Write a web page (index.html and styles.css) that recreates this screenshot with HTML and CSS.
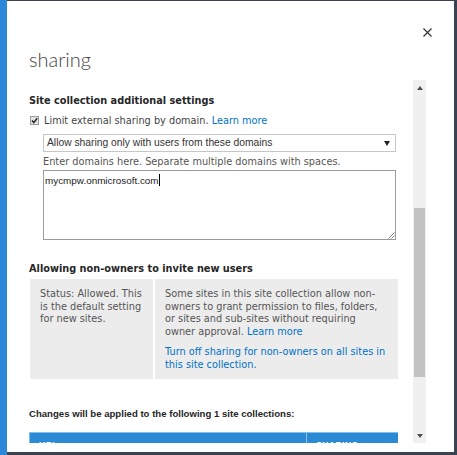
FILE: index.html
```html
<!DOCTYPE html>
<html lang="en">
<head>
<meta charset="utf-8">
<title>sharing</title>
<link rel="stylesheet" href="styles.css">
</head>
<body>
<div class="app-strip"></div>
<div class="dialog">
  <div class="dlg-head">
    <h1 class="title">sharing</h1>
    <button class="close" aria-label="Close">
      <svg width="9" height="9" viewBox="0 0 9 9"><path d="M0.5 0.5 L8.5 8.5 M8.5 0.5 L0.5 8.5" stroke="#333" stroke-width="1.2" fill="none"/></svg>
    </button>
  </div>
  <div class="scroll">
    <div class="scroll-content">
      <section class="sec">
        <h2 class="sec-h">Site collection additional settings</h2>
        <div class="check-row">
          <span class="cb"><svg width="9" height="9" viewBox="0 0 9 9"><rect x="0.5" y="0.5" width="8" height="8" fill="#e6e6e6" stroke="#9a9a9a"/><path d="M2 4.6 L3.8 6.6 L7.2 2.2" stroke="#222" stroke-width="1.5" fill="none"/></svg></span>
          <span>Limit external sharing by domain. <a class="link" href="#">Learn more</a></span>
        </div>
        <div class="indent">
          <div class="select">
            <span>Allow sharing only with users from these domains</span>
            <svg class="sel-arrow" width="6" height="5" viewBox="0 0 6 5"><path d="M0 0 H6 L3 5 Z" fill="#222"/></svg>
          </div>
          <div class="hint">Enter domains here. Separate multiple domains with spaces.</div>
          <div class="textarea">
            <span class="ta-text">mycmpw.onmicrosoft.com</span><span class="caret"></span>
            <svg class="grip" width="8" height="8" viewBox="0 0 8 8"><path d="M7.5 1.5 L1.5 7.5 M7.5 4.5 L4.5 7.5" stroke="#888" stroke-width="1" fill="none"/></svg>
          </div>
        </div>
      </section>

      <section class="sec sec-invite">
        <h2 class="sec-h">Allowing non-owners to invite new users</h2>
        <div class="info-grid">
          <div class="info-cell info-left">Status: Allowed. This is the default setting for new sites.</div>
          <div class="info-cell info-right">
            <p>Some sites in this site collection allow non-owners to grant permission to files, folders, or sites and sub-sites without requiring owner approval. <a class="link" href="#">Learn more</a></p>
            <p><a class="link" href="#">Turn off sharing for non-owners on all sites in this site collection.</a></p>
          </div>
        </div>
      </section>

      <section class="sec sec-changes">
        <h2 class="changes-h">Changes will be applied to the following 1 site collections:</h2>
        <div class="tbl-head">
          <div class="th th-url">URL</div>
          <div class="th th-sharing">SHARING</div>
        </div>
      </section>
    </div>
    <div class="scrollbar">
      <div class="sb-btn"><svg width="6" height="4" viewBox="0 0 6 4"><path d="M0 4 H6 L3 0 Z" fill="#505050"/></svg></div>
      <div class="sb-track">
        <div class="sb-thumb"></div>
      </div>
      <div class="sb-btn"><svg width="6" height="4" viewBox="0 0 6 4"><path d="M0 0 H6 L3 4 Z" fill="#505050"/></svg></div>
    </div>
  </div>
</div>
</body>
</html>
```

FILE: styles.css
```css
* { box-sizing: border-box; }

html, body {
  margin: 0;
  padding: 0;
}

body {
  width: 457px;
  height: 455px;
  overflow: hidden;
  display: flex;
  background: #3b4350;
  font-family: "DejaVu Sans", Verdana, sans-serif;
  font-size: 9.75px;
  line-height: 12.6px;
  color: #444;
}

.app-strip {
  width: 7px;
  flex: none;
  background: #2b88d8;
}

.dialog {
  flex: 1;
  margin: 1px 3px 3px 0;
  background: #fff;
  display: flex;
  flex-direction: column;
}

.dlg-head {
  display: flex;
  justify-content: space-between;
  align-items: flex-start;
  padding: 27px 22px 0 22px;
}

.title {
  margin: 19px 0 0 0;
  font-family: Lato, "Open Sans", sans-serif;
  font-weight: 300;
  font-size: 20px;
  line-height: 24px;
  color: #444;
}

.close {
  margin: 0;
  padding: 0;
  border: 0;
  background: none;
  width: 9px;
  height: 9px;
  display: block;
}
.close svg { display: block; }

.scroll {
  flex: 1;
  display: flex;
  margin-top: 9px;
  margin-bottom: 9px;
  min-height: 0;
}

.scroll-content {
  flex: 1;
  overflow: hidden;
  padding: 14px 15px 0 22px;
}

.sec-h {
  margin: 0;
  font-family: "DejaVu Sans", Verdana, sans-serif;
  font-weight: bold;
  font-size: 9.75px;
  line-height: 13px;
  color: #262626;
}

.check-row {
  display: flex;
  align-items: center;
  gap: 5px;
  margin-top: 7px;
  line-height: 13px;
  padding-left: 1px;
}
.cb { display: block; width: 9px; height: 9px; }
.cb svg { display: block; }

.link {
  color: #0072c6;
  text-decoration: none;
}

.indent {
  margin-left: 14px;
  margin-right: 2px;
}

.select {
  margin-top: 7px;
  height: 18px;
  border: 1px solid #c6c6c6;
  display: flex;
  align-items: center;
  justify-content: space-between;
  padding: 0 5px 0 3px;
  font-family: "Liberation Sans", Arial, sans-serif;
  font-size: 10.3px;
  color: #333;
}
.sel-arrow { display: block; }

.hint {
  margin-top: 2.5px;
  line-height: 13px;
  color: #555;
}

.textarea {
  position: relative;
  margin-top: 2.5px;
  height: 70px;
  border: 1px solid #9c9c9c;
  padding: 3px 1px;
  font-family: "Liberation Sans", Arial, sans-serif;
  font-size: 9.9px;
  line-height: 13px;
  color: #222;
}
.caret {
  display: inline-block;
  width: 1px;
  height: 12px;
  background: #000;
  vertical-align: -2px;
}
.grip {
  position: absolute;
  right: 0;
  bottom: 0;
  display: block;
}

.sec-invite { margin-top: 21.5px; }

.info-grid {
  margin-top: 4.5px;
  margin-left: 1px;
  display: grid;
  grid-template-columns: 123px 1fr;
  column-gap: 2px;
}
.info-cell {
  background: #ececec;
  padding: 9px 6px 8px 10px;
  color: #555;
}
.info-right { padding-right: 12px; }
.info-right p { margin: 0; }
.info-right p + p { margin-top: 7.6px; }

.sec-changes { margin-top: 27.5px; }

.changes-h {
  margin: 0;
  font-family: "Liberation Sans", Arial, sans-serif;
  font-weight: bold;
  font-size: 9.6px;
  line-height: 13px;
  color: #262626;
}

.tbl-head {
  margin-top: 12.5px;
  display: grid;
  grid-template-columns: 276px 1fr;
  background: #2a8ad4;
  border-top: 1px solid #7fbdee;
  border-left: 1px solid #7fbdee;
  height: 26px;
}
.th {
  padding: 6px 10px 0 9px;
  font-family: "Liberation Sans", Arial, sans-serif;
  font-weight: bold;
  font-size: 8.5px;
  line-height: 12px;
  color: #fff;
  letter-spacing: 0.5px;
}
.th-sharing { border-left: 1px solid #8cc4ee; }

.scrollbar {
  width: 13px;
  flex: none;
  margin-right: 28px;
  background: #f0f0f0;
  display: flex;
  flex-direction: column;
}
.sb-btn {
  height: 15px;
  display: flex;
  align-items: center;
  justify-content: center;
  flex: none;
}
.sb-btn svg { display: block; }
.sb-track {
  flex: 1;
  padding: 113px 1px 0 1px;
}
.sb-thumb {
  height: 169px;
  background: #c2c2c2;
}
```
